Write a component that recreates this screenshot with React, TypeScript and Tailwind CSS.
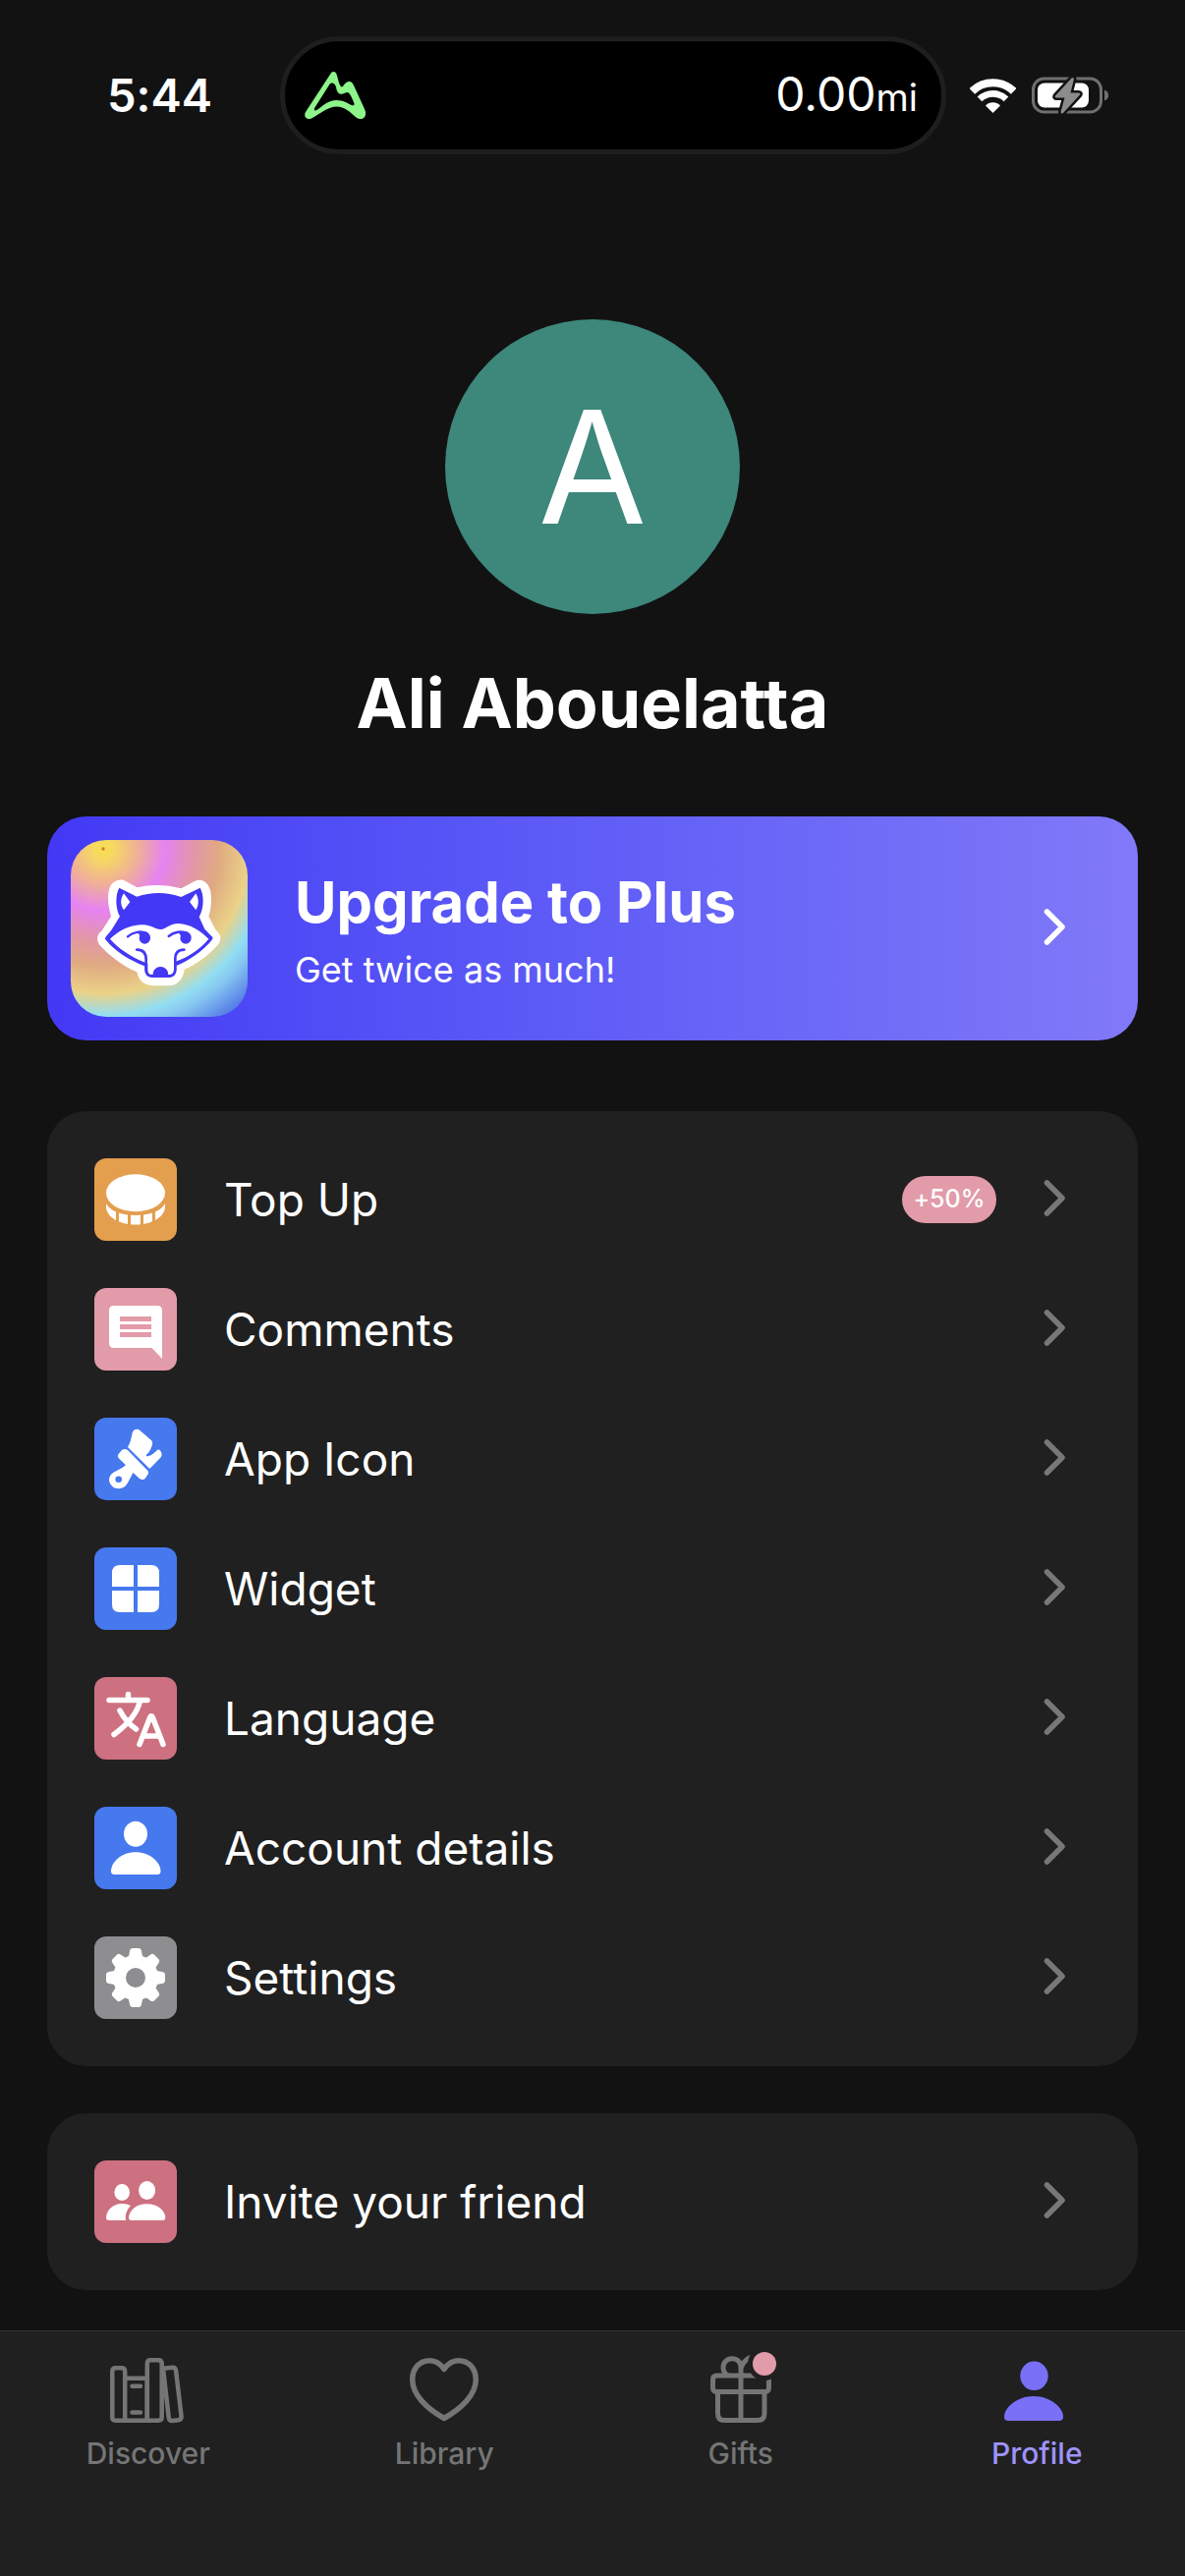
import React, { useState } from "react";
import clsx from "clsx";

const MountainLogo = () => (
  <svg viewBox="0 0 62 48" className="w-[62px] h-12" aria-hidden="true">
    <path
      fill="#8df58a"
      fillRule="evenodd"
      d="M26.5 2C28 -.7 31 -.7 32.3 2C34 6 34.5 12 37 15C37.8 15.8 38.5 15.5 39.2 14.5C41 12 43 10 45.5 10C48 10 49 12 50 14L60.8 37.5C62.3 41 62.5 43 61.5 45.2C60 48.6 55.5 49 52.5 46.5C46 41 41 35.5 32.5 35.5C24 35.5 16 42.5 8 47C5 48.7 2 48.3.7 46C-.6 43.5.8 41.5 2.3 39ZM25 13.5L10.4 36.5C9 39 10.5 40.3 12.8 38.8C19 34.5 24 29 32.5 29C39.5 29 43.5 32 47.6 34C50 35 51.2 33.8 50.2 31.5C48.7 28 47.5 24.5 45.3 22C44 20.5 42.5 21 41 21.7C38.5 23 35.5 23.5 33.8 21C32 18.5 32.5 15 30.5 12.8C28.8 11 26.5 11.2 25 13.5Z"
    />
  </svg>
);

const WifiIcon = () => (
  <svg viewBox="0 0 47 35" className="w-[47px] h-[35px]" aria-hidden="true">
    <g fill="none" stroke="#fff">
      <path strokeWidth="8" d="M2.3 12.8A30.5 30.5 0 0 1 44.7 12.8" />
      <path strokeWidth="6.6" d="M10 20.9A19.2 19.2 0 0 1 37 20.9" />
    </g>
    <path fill="#fff" d="M23.5 35L16 27.4A10.6 10.6 0 0 1 31 27.4Z" />
  </svg>
);

const BatteryIcon = () => (
  <svg viewBox="0 0 78 38" className="w-[78px] h-[38px]" aria-hidden="true">
    <rect x="1.5" y="2" width="69" height="34" rx="11" fill="none" stroke="#6f6f6f" strokeWidth="3" />
    <path d="M74 13.5C79.5 15 79.5 23 74 24.5Z" fill="#6f6f6f" />
    <rect x="6" y="6.5" width="52" height="25" rx="7" fill="#fff" />
    <path
      d="M40.5 1.5L24 19.5Q23 21.5 25.5 21.5H33.5L29.5 36Q30 38.5 32 37L49 18.5Q50 16.5 47.5 16.5H39.5L43 2.5Q42.5 0 40.5 1.5Z"
      fill="#8c8c8c"
      stroke="#121212"
      strokeWidth="5"
      paintOrder="stroke"
    />
  </svg>
);

const Chevron = () => (
  <svg viewBox="0 0 72 72" className="w-[72px] h-[72px] shrink-0" aria-hidden="true">
    <path
      d="M27.5 19L43 34.5L27.5 50"
      fill="none"
      stroke="currentColor"
      strokeWidth="5.5"
      strokeLinecap="round"
      strokeLinejoin="round"
    />
  </svg>
);

const RaccoonBadge = () => (
  <svg
    viewBox="0 0 540 540"
    className="w-[180px] h-[180px] shrink-0 rounded-[36px]"
    aria-hidden="true"
  >
    <defs>
      <radialGradient id="rainbow" gradientUnits="userSpaceOnUse" cx="99" cy="27" r="660">
        <stop offset="0" stopColor="#f7e04e" />
        <stop offset="0.05" stopColor="#f6d862" />
        <stop offset="0.17" stopColor="#efad9c" />
        <stop offset="0.285" stopColor="#e683f2" />
        <stop offset="0.42" stopColor="#e296a8" />
        <stop offset="0.54" stopColor="#e0aa82" />
        <stop offset="0.67" stopColor="#ead287" />
        <stop offset="0.77" stopColor="#93def2" />
        <stop offset="0.83" stopColor="#86c6f0" />
        <stop offset="0.95" stopColor="#577fe8" />
        <stop offset="1" stopColor="#4d6fe8" />
      </radialGradient>
    </defs>
    <rect width="540" height="540" fill="url(#rainbow)" />
    <circle cx="99" cy="27" r="5" fill="#cf7a3c" />
    <g transform="translate(-96 -105)">
      <path
        fill="#fff"
        d="M245 227Q255 226 264 231L299 250Q366 235 433 253L474 231C495 221 514 232 522 258C528 285 525 315 517 338L539 380C556 392 557 412 545 425C515 458 480 485 443 500C440 530 420 550 395 550H348C322 550 303 535 298 508C255 490 210 455 184 425C173 410 176 393 191 382L219 338C208 300 208 270 215 250C222 234 233 228 245 227Z"
      />
      <path
        fill="#4338f5"
        d="M244 251L298 278Q366 255 433 279L491 251C503 272 504 312 488 340L505 377L529 402Q530 406 528 409C500 445 455 475 418 489V505Q415 525 392 525H348Q322 523 322 500V490C280 475 230 445 202 409Q200 406 202 402L220 380L246 338C233 315 231 275 244 251Z"
      />
      <path
        fill="#fff"
        d="M216 407C245 380 275 366 310 364C340 362 352 378 371 378C388 378 395 360 425 360C460 362 490 380 517 407C492 438 455 462 420 475L411 482V505Q411 516 400 516H340Q331 516 331 505V482L320 478C280 462 240 435 216 407Z"
      />
      <path
        fill="none"
        stroke="#4338f5"
        strokeWidth="8"
        strokeLinecap="round"
        d="M298 440C318 440 326 452 326 470V500Q326 521 348 521H392Q415 521 415 500V468C415 450 422 440 442 440"
      />
      <path fill="#4338f5" d="M347 521C345 502 357 492 370 492S396 502 393 521Z" />
      <path
        fill="none"
        stroke="#4338f5"
        strokeWidth="7"
        strokeLinecap="round"
        d="M270 400C285 386 310 381 328 390M395 399C410 386 435 381 453 390"
      />
      <path
        fill="#4338f5"
        d="M315 384C332 384 340 394 339 405A17 17 0 0 1 305 405C307 400 308 396 300 388ZM440 384C457 384 465 394 464 405A17 17 0 0 1 430 405C432 400 433 396 425 388Z"
      />
      <path
        fill="#fff"
        d="M258 268L277 294L258 319C247 303 247 285 258 268ZM478 268L459 294L478 319C488 303 488 285 478 268Z"
      />
    </g>
  </svg>
);

const icons = {
  coin: (
    <>
      <path d="M12 46C16 54 28 58 42 58S68 54 72 46V49C72 60 58 67.5 42 67.5S12 60 12 49Z" />
      <path stroke="#e39e4e" strokeWidth="3" d="M23.5 44V70M35.5 50V70M48.5 50V70M60.5 44V70" />
      <ellipse
        cx="42"
        cy="35.3"
        rx="30"
        ry="19"
        stroke="#e39e4e"
        strokeWidth="6"
        paintOrder="stroke"
      />
    </>
  ),
  comment: (
    <path
      fillRule="evenodd"
      d="M20 18H64Q69 18 69 23V72L58.5 61H20Q15 61 15 56V23Q15 18 20 18ZM26 29V34H58V29ZM26 37V42H58V37ZM26 45V50H58V45Z"
    />
  ),
  brush: (
    <>
      <path d="M38.5 16C39.5 11.5 44 10.5 47 13.5L58 23C59.5 24.5 59.5 26 58.5 29C57 33.5 55 36 53 37.5C52.5 39 53 39.5 54.5 39.2C59 38.2 61 36 64 33C65 32 66.5 32.3 67.5 34C69 36.5 69 38.5 67.5 40.5L56.3 52L34 30C36.5 26 37.5 21 38.5 16Z" />
      <path
        fillRule="evenodd"
        d="M28 33C30 31.5 32 31.5 34 33L54 53.5C55.5 55 55.5 57 54 58.5L52 61.5C50.5 63.5 48 63.5 46 62L39.5 56C37 60 35 65 32.5 68.5C28.5 73.5 21 73.3 17.5 69C13.5 64.5 14.5 58.5 20 55.5C24 53 29 51 32 48.3L25 41.5C23.5 40 23.5 38 25 36.5ZM24.7 59.5A3.3 3.3 0 1 0 24.7 66.1A3.3 3.3 0 1 0 24.7 59.5Z"
      />
    </>
  ),
  widget: (
    <path d="M26 18H40V40H18V26Q18 18 26 18ZM44 18H58Q66 18 66 26V40H44ZM18 44H40V66H26Q18 66 18 58ZM44 44H66V58Q66 66 58 66H44Z" />
  ),
  language: (
    <path
      fill="none"
      stroke="#fff"
      strokeWidth="5.5"
      strokeLinecap="round"
      strokeLinejoin="round"
      d="M15 23.5H54M34.5 17.5V23.5M46.5 24C44 37 34 48 20 58.5M26 34C30 42 36 48.5 42.5 53M46 68.5L56.5 41.5Q58 38 59.5 41.5L70 68.5M50 60H66"
    />
  ),
  person: (
    <>
      <ellipse cx="42" cy="27.8" rx="12" ry="13" />
      <path d="M42 46.3C57 46.3 67.5 57 67.5 65.5Q67.5 69 64 69H20.5Q17 69 17 65.5C17 57 27 46.3 42 46.3Z" />
    </>
  ),
  gear: (
    <>
      {[0, 45, 90, 135, 180, 225, 270, 315].map((angle) => (
        <path
          key={angle}
          transform={`rotate(${angle} 42 42)`}
          d="M33 24Q35.3 21 36 15Q36.5 12 39 12H45Q47.5 12 48 15Q48.7 21 51 24V30H33Z"
        />
      ))}
      <circle cx="42" cy="42" r="16.5" fill="none" stroke="#fff" strokeWidth="13" />
    </>
  ),
  friends: (
    <>
      <ellipse cx="28.2" cy="32.5" rx="7.8" ry="8.5" />
      <ellipse cx="53.6" cy="30.5" rx="8.5" ry="9.5" />
      <path d="M28 44C31.5 44 34.5 44.8 37 46.3C33.5 49.5 31 55 32 61H15Q12 61 12 58C12.5 50.5 19 44 28 44Z" />
      <path d="M53.5 44.3C65 44.3 72 51.5 72.3 58Q72.3 61 69.5 61H37.8Q35 61 35 58C35.5 51.5 42 44.3 53.5 44.3Z" />
    </>
  ),
};

interface MenuItem {
  label: string;
  icon: keyof typeof icons;
  color: string;
  badge?: string;
}

const menuItems: MenuItem[] = [
  { label: "Top Up", icon: "coin", color: "bg-[#e39e4e]", badge: "+50%" },
  { label: "Comments", icon: "comment", color: "bg-[#e29ba8]" },
  { label: "App Icon", icon: "brush", color: "bg-[#4678ee]" },
  { label: "Widget", icon: "widget", color: "bg-[#4678ee]" },
  { label: "Language", icon: "language", color: "bg-[#cd7080]" },
  { label: "Account details", icon: "person", color: "bg-[#4678ee]" },
  { label: "Settings", icon: "gear", color: "bg-[#8e8e90]" },
];

const inviteItems: MenuItem[] = [
  { label: "Invite your friend", icon: "friends", color: "bg-[#cd7080]" },
];

function MenuCard({ items }: { items: MenuItem[] }) {
  return (
    <ul className="flex flex-col gap-12 rounded-[40px] bg-[#202020] p-12">
      {items.map((item) => (
        <li key={item.label}>
          <button type="button" className="flex w-full items-center text-left">
            <span className={clsx("h-[84px] w-[84px] shrink-0 rounded-xl", item.color)}>
              <svg viewBox="0 0 84 84" fill="#fff" aria-hidden="true">
                {icons[item.icon]}
              </svg>
            </span>
            <span className="ml-12 flex-1 text-[46px] leading-[60px]">{item.label}</span>
            {item.badge && (
              <span className="mr-6 flex h-12 w-24 items-center justify-center rounded-full bg-[#e29ba8] text-[25px] font-medium">
                {item.badge}
              </span>
            )}
            <span className="text-[#787878]">
              <Chevron />
            </span>
          </button>
        </li>
      ))}
    </ul>
  );
}

const tabs = [
  {
    name: "Discover",
    icon: (
      <g fill="none" stroke="currentColor" strokeWidth="4.5" strokeLinecap="round" strokeLinejoin="round">
        <path d="M18.2 66.7H8.5Q5.3 66.7 5.3 63.5V17Q5.3 13.3 8.8 13.3H14.7Q18.2 13.3 18.2 17ZM18.2 23.7H40.8V66.7H18.2" />
        <path d="M40.8 66.7V9Q40.8 5.3 44.3 5.3H52.2Q55.7 5.3 55.7 9V63Q55.7 66.7 52.2 66.7ZM25.5 31.7H34M25.5 58.5H34" />
        <path d="M57 13.8L66.5 12.7Q69.5 12.5 70 15.5L75.6 62.5Q75.7 65.7 72.7 66.2L66.3 67Q63.3 67.2 62.8 64.2Z" />
      </g>
    ),
  },
  {
    name: "Library",
    icon: (
      <path
        fill="none"
        stroke="currentColor"
        strokeWidth="5.5"
        strokeLinejoin="round"
        d="M42 14.5C38 8.5 33 5.7 27.5 5.7C17 5.7 9.7 14 9.7 25C9.7 41 25 55 42 64.5C59 55 74.3 41 74.3 25C74.3 14 67 5.7 56.5 5.7C51 5.7 46 8.5 42 14.5Z"
      />
    ),
  },
  {
    name: "Gifts",
    icon: (
      <>
        <g fill="none" stroke="currentColor" strokeWidth="5">
          <path d="M18 21H66.5Q70.5 21 70.5 25V33.5Q70.5 37.5 66.5 37.5H17.5Q13.5 37.5 13.5 33.5V25Q13.5 21 17.5 21Z" />
          <path d="M18.5 38V59.5Q18.5 66.5 25 66.5H59Q66 66.5 66 59.5V38M42 66V13M42 21V13C42 7 38 3.7 33 3.7C27.5 3.7 24 8 24 12.5C24 16.5 26 19.5 29 21M42 14C43.5 8.5 46 6 49.5 3.5C54 1 60 5 60 12C60 16 58 19.5 54 21" />
        </g>
        <circle cx="66" cy="9" r="17" fill="#202020" />
        <circle cx="66" cy="9" r="12" fill="#e29ba8" />
      </>
    ),
  },
  {
    name: "Profile",
    icon: (
      <g fill="#7a70f7">
        <ellipse cx="39.5" cy="21.3" rx="14.2" ry="14.7" />
        <path d="M39 42C56 42 69 53.5 69 63Q69 67 65 67H13Q9 67 9 63C9 53.5 22 42 39 42Z" />
      </g>
    ),
  },
];

export default function App() {
  const [activeTab, setActiveTab] = useState("Profile");

  return (
    <div className="flex min-h-screen flex-col bg-[#121212] font-['Inter',sans-serif] text-white [font-variant-ligatures:none]">
      {/* Status bar */}
      <header className="flex items-center pt-[37px]">
        <div className="w-[285px] pl-10 text-center text-[47px] leading-[60px] font-semibold">
          5:44
        </div>
        <div className="flex h-[120px] flex-1 items-center justify-between rounded-full border-[5px] border-[#1e1e1e] bg-black pr-6 pl-5">
          <MountainLogo />
          <span className="text-[48px] leading-[60px]">
            0.00<span className="text-[38px]">mi</span>
          </span>
        </div>
        <div className="flex w-[243px] items-center gap-4 pl-6">
          <WifiIcon />
          <BatteryIcon />
        </div>
      </header>

      <main className="flex-1 px-12 pt-[168px] pb-10">
        <div className="flex flex-col items-center">
          <div className="flex h-[300px] w-[300px] items-center justify-center rounded-full bg-[#3d877b] text-[160px] leading-none">
            A
          </div>
          <h1 className="mt-12 text-[70px] leading-[86px] font-bold">Ali Abouelatta</h1>
        </div>

        <button
          type="button"
          className="mt-[72px] flex w-full items-center rounded-[40px] bg-linear-to-r from-[#4338f5] to-[#8179f8] p-6 pr-12 text-left"
        >
          <RaccoonBadge />
          <span className="ml-12 flex flex-1 flex-col gap-1.5">
            <span className="text-[58px] leading-[78px] font-bold">Upgrade to Plus</span>
            <span className="text-[36px] leading-[48px]">Get twice as much!</span>
          </span>
          <Chevron />
        </button>

        <div className="mt-[72px] flex flex-col gap-12">
          <MenuCard items={menuItems} />
          <MenuCard items={inviteItems} />
        </div>
      </main>

      {/* Tab bar */}
      <nav className="grid grid-cols-4 border-t border-[#363636] bg-[#202020] pt-6 pb-[107px]">
        {tabs.map((tab) => (
          <button
            key={tab.name}
            type="button"
            aria-current={activeTab === tab.name ? "page" : undefined}
            onClick={() => setActiveTab(tab.name)}
            className={clsx(
              "flex flex-col items-center gap-2.5 text-[30px] leading-9 font-medium",
              activeTab === tab.name ? "text-[#9d93f8]" : "text-[#757575]"
            )}
          >
            <svg
              viewBox="0 0 84 72"
              className="h-[72px] w-[84px] overflow-visible"
              aria-hidden="true"
            >
              {tab.icon}
            </svg>
            {tab.name}
          </button>
        ))}
      </nav>
    </div>
  );
}
